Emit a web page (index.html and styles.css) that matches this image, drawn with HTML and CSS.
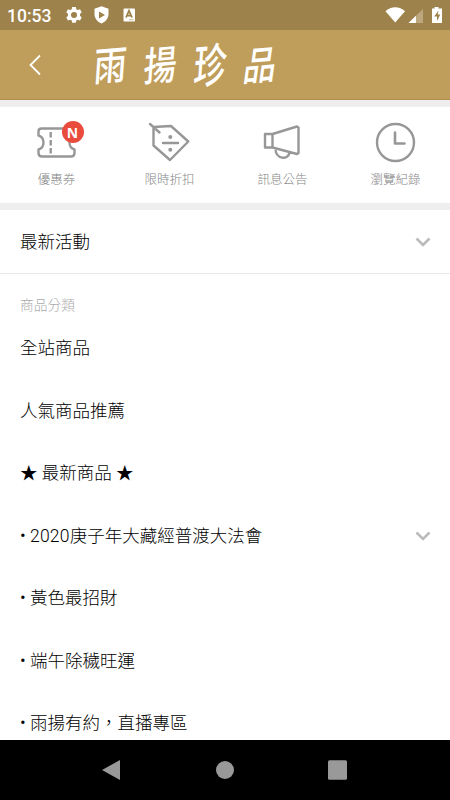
FILE: index.html
```html
<!DOCTYPE html>
<html lang="zh-Hant">
<head>
    <meta charset="UTF-8">
    <meta name="viewport" content="width=device-width, initial-scale=1.0">
    <title>雨揚珍品</title>
    <link rel="stylesheet" href="styles.css">
</head>
<body>
    <div class="phone">
        <div class="status-bar">
            <span class="time">10:53</span>
            <svg class="status-icons" width="72" height="20" viewBox="0 0 72 20">
                <!-- gear -->
                <path fill="#fff" fill-rule="evenodd" d="M6.2 2h3.6l.5 2.2 1.5.9 2.2-.8 1.7 3-1.7 1.6v1.9l1.7 1.6-1.7 3-2.2-.7-1.5.9-.5 2.2H6.2l-.5-2.2-1.5-.9-2.2.7-1.7-3L2 10.800V8.900L.3 7.300l1.700-3 2.200.8 1.500-.9zM8 6.900a3 3 0 1 0 0 6 3 3 0 0 0 0-6z"/>
                <!-- shield -->
                <path fill="#fff" fill-rule="evenodd" d="M35.500 1.200l7 2.600v5.300c0 4.500-3 7.800-7 9.400-4-1.600-7-4.900-7-9.400V3.800zM33 6.400v7l6-3.500z"/>
                <rect x="57.500" y="3.500" width="11.500" height="13" rx="1" fill="#fff"/>
                <path fill="none" stroke="#9e824b" stroke-width="1.800" d="M60 12.500L63 5.800l3 6.700M61 10.600h4"/>
                <path stroke="#9e824b" stroke-width=".6" d="M63 14.800h4.500"/>
            </svg>
            <svg class="signal-icons" width="58" height="20" viewBox="0 0 58 20">
                <!-- wifi, mobile signal, battery -->
                <path fill="#fff" d="M.500 6.200C6 1 14.500 1 20 6.200L10.200 17.500z"/>
                <path fill="#bda77f" d="M38 4v14H23.500z"/>
                <path fill="#fff" d="M31 10.800V18h-7.500z"/>
                <path fill="#fff" d="M49.500 2h4v1.500H57V18H47V3.500h2.500z"/>
                <path fill="#9e824b" d="M53.500 5.500l-4.300 6H52v4.500l3.300-6.500h-2.500z"/>
            </svg>
        </div>

        <div class="header">
            <svg class="back" width="12" height="22" viewBox="0 0 12 22">
                <path d="M11 1.500L1.500 11 11 20.500"/>
            </svg>
            <h1 class="brand"><span>雨</span><span>揚</span><span>珍</span><span>品</span></h1>
        </div>

        <div class="shortcuts">
            <div class="shortcut">
                <div class="shortcut-icon">
                    <svg width="42" height="42" viewBox="0 0 42 42">
                        <path d="M6.500 7.500h30q3 0 3 3v3.500q-5 2-5 7.500t5 7V32q0 3.500-3.500 3.500H7q-3.500 0-3.500-3.500v-3.500q5-1.500 5-7t-5-7V10.500q0-3 3-3z"/>
                        <path stroke-linecap="butt" d="M15.700 11v5.500M15.700 19v5.500M15.700 27v5.500"/>
                    </svg>
                    <span class="badge">N</span>
                </div>
                <span>優惠券</span>
            </div>
            <div class="shortcut">
                <div class="shortcut-icon">
                    <svg width="42" height="42" viewBox="0 0 42 42">
                        <path d="M5.500 6L23 5l17.300 15.500L22 39 5.500 24.500zM2 3l9.500 8.500M15 22h15"/>
                        <circle class="dot" cx="22.300" cy="16" r="2"/>
                        <circle class="dot" cx="22.300" cy="28.700" r="2"/>
                    </svg>
                </div>
                <span>限時折扣</span>
            </div>
            <div class="shortcut">
                <div class="shortcut-icon">
                    <svg width="42" height="42" viewBox="0 0 42 42">
                        <path d="M4 13h7.500v13.500H4zM11.500 13L36 5.500l1.500 1V32L36 33l-24.500-6.500zM14.500 27.500c0 11.500 13 11.500 14 4"/>
                    </svg>
                </div>
                <span>訊息公告</span>
            </div>
            <div class="shortcut">
                <div class="shortcut-icon">
                    <svg width="42" height="42" viewBox="0 0 42 42">
                        <circle cx="21.500" cy="21.500" r="18.500"/>
                        <path stroke-width="2.600" d="M21 11.500v11h9.500"/>
                    </svg>
                </div>
                <span>瀏覽紀錄</span>
            </div>
        </div>

        <div class="row news">
            <span>最新活動</span>
            <svg class="chevron" width="16" height="10" viewBox="0 0 16 10"><path d="M1.500 1.500L8 8l6.500-6.500"/></svg>
        </div>

        <div class="menu">
            <div class="menu-label">商品分類</div>
            <div class="row">全站商品</div>
            <div class="row">人氣商品推薦</div>
            <div class="row">★ 最新商品 ★</div>
            <div class="row">
                <span>• <span class="year">2020</span>庚子年大藏經普渡大法會</span>
                <svg class="chevron" width="16" height="10" viewBox="0 0 16 10"><path d="M1.500 1.500L8 8l6.500-6.500"/></svg>
            </div>
            <div class="row">• 黃色最招財</div>
            <div class="row">• 端午除穢旺運</div>
            <div class="row">• 雨揚有約，直播專區</div>
        </div>

        <div class="nav-bar">
            <svg width="20" height="22" viewBox="0 0 20 22"><path d="M18 1v20L0 11z"/></svg>
            <svg width="20" height="22" viewBox="0 0 20 22"><circle cx="10" cy="11" r="9"/></svg>
            <svg width="20" height="22" viewBox="0 0 20 22"><rect x="0" y="1.200" width="19" height="19.500" rx="1.500"/></svg>
        </div>
    </div>
</body>
</html>
```

FILE: styles.css
```css
* {
    box-sizing: border-box;
}

body {
    margin: 0;
    font-family: Roboto, "Noto Sans CJK TC", sans-serif;
    font-weight: 300;
    color: #000;
    background-color: #fff;
}

.phone {
    width: 450px;
    height: 800px;
    display: flex;
    flex-direction: column;
    overflow: hidden;
}

.phone svg {
    display: block;
    flex: none;
}

/* Status bar */
.status-bar {
    flex: none;
    height: 30px;
    padding: 0 7px;
    display: flex;
    align-items: center;
    background-color: #9e824b;
    color: #fff;
}

.time {
    width: 59px;
    font-size: 17.5px;
    font-weight: 500;
    line-height: 30px;
    padding-top: 2px;
}

.signal-icons {
    margin-left: auto;
}

/* Header */
.header {
    flex: none;
    height: 70px;
    padding-left: 29px;
    display: flex;
    align-items: center;
    background-color: #bf9d5b;
    border-bottom: 1px solid #b28e4b;
}

.back path {
    fill: none;
    stroke: #fff;
    stroke-width: 1.8;
}

/* Brush-like lettering: each character leans and stretches a bit differently */
.brand {
    margin: 0 0 4px 53px;
    display: flex;
    gap: 17px;
    color: #fff;
    font-family: "Noto Sans CJK TC", sans-serif;
    font-size: 33px;
    font-weight: 500;
    line-height: 50px;
}

.brand span {
    transform: skew(-4deg, -5deg) scaleY(1.22);
}

.brand span:nth-child(3) {
    transform: skew(-4deg, -5deg) scaleY(1.42);
}

.brand span:nth-child(4) {
    transform: skew(-8deg, -5deg) scaleY(1.2);
}

/* Shortcuts */
.shortcuts {
    flex: none;
    height: 110px;
    padding-top: 14px;
    display: flex;
    border-top: 7.5px solid #eee;
    border-bottom: 7.5px solid #eee;
}

.shortcut {
    flex: none;
    width: 113px;
    display: flex;
    flex-direction: column;
    align-items: center;
    color: #858585;
    font-size: 12.5px;
    line-height: 18px;
}

.shortcut-icon {
    position: relative;
    height: 50px;
    margin-right: 2px;
}

.shortcut-icon svg {
    fill: none;
    stroke: #979797;
    stroke-width: 2.4;
    stroke-linecap: round;
    stroke-linejoin: round;
}

.shortcut-icon .dot {
    fill: #979797;
    stroke: none;
}

.badge {
    position: absolute;
    top: 0;
    right: -7px;
    width: 22px;
    height: 22px;
    border-radius: 50%;
    background-color: #e94b3c;
    color: #fff;
    font-family: "Open Sans", sans-serif;
    font-size: 14px;
    font-weight: 700;
    line-height: 23px;
    text-align: center;
}

/* Menu */
.row {
    flex: none;
    height: 62.5px;
    padding: 0 19px 0 20px;
    display: flex;
    align-items: center;
    justify-content: space-between;
    font-size: 17.5px;
    line-height: 26px;
}

.year {
    letter-spacing: 0.25px;
}

.news {
    height: 64px;
    border-bottom: 1.5px solid #e8e8e8;
}

.chevron path {
    fill: none;
    stroke: #bbb;
    stroke-width: 2.6;
}

.menu {
    flex: 1;
    min-height: 0;
    overflow: hidden;
}

.menu-label {
    height: 43px;
    padding: 21px 20px 0;
    color: #aaa;
    font-size: 13.75px;
    line-height: 20px;
}

/* Bottom navigation */
.nav-bar {
    flex: none;
    height: 60px;
    padding: 0 102px;
    display: flex;
    align-items: center;
    justify-content: space-between;
    background-color: #000;
}

.nav-bar svg {
    fill: #999;
}
```
